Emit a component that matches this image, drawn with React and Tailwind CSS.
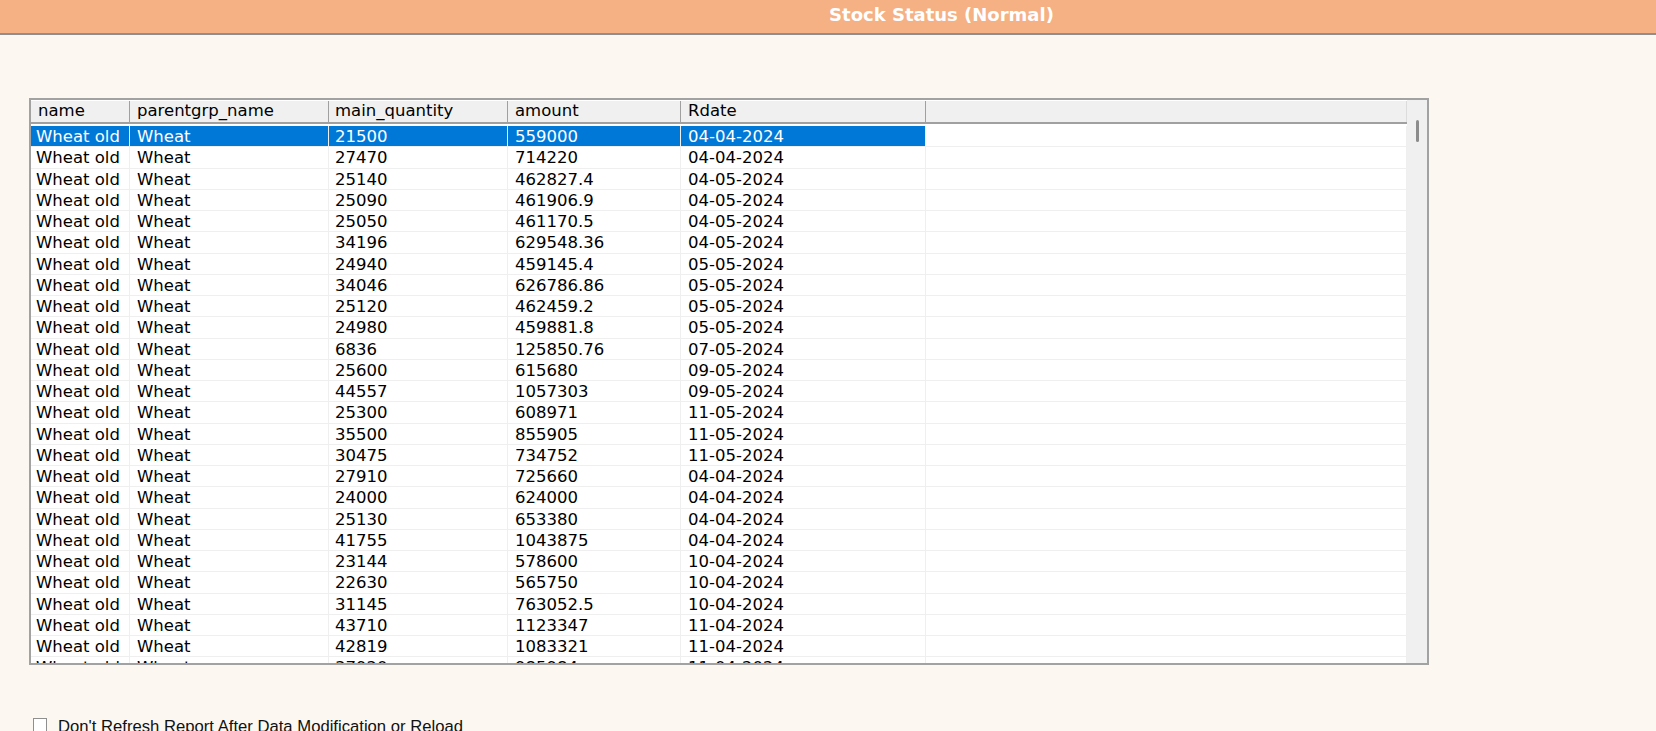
import React from 'react';

const rows = [
  ['Wheat old', 'Wheat', '21500', '559000', '04-04-2024'],
  ['Wheat old', 'Wheat', '27470', '714220', '04-04-2024'],
  ['Wheat old', 'Wheat', '25140', '462827.4', '04-05-2024'],
  ['Wheat old', 'Wheat', '25090', '461906.9', '04-05-2024'],
  ['Wheat old', 'Wheat', '25050', '461170.5', '04-05-2024'],
  ['Wheat old', 'Wheat', '34196', '629548.36', '04-05-2024'],
  ['Wheat old', 'Wheat', '24940', '459145.4', '05-05-2024'],
  ['Wheat old', 'Wheat', '34046', '626786.86', '05-05-2024'],
  ['Wheat old', 'Wheat', '25120', '462459.2', '05-05-2024'],
  ['Wheat old', 'Wheat', '24980', '459881.8', '05-05-2024'],
  ['Wheat old', 'Wheat', '6836', '125850.76', '07-05-2024'],
  ['Wheat old', 'Wheat', '25600', '615680', '09-05-2024'],
  ['Wheat old', 'Wheat', '44557', '1057303', '09-05-2024'],
  ['Wheat old', 'Wheat', '25300', '608971', '11-05-2024'],
  ['Wheat old', 'Wheat', '35500', '855905', '11-05-2024'],
  ['Wheat old', 'Wheat', '30475', '734752', '11-05-2024'],
  ['Wheat old', 'Wheat', '27910', '725660', '04-04-2024'],
  ['Wheat old', 'Wheat', '24000', '624000', '04-04-2024'],
  ['Wheat old', 'Wheat', '25130', '653380', '04-04-2024'],
  ['Wheat old', 'Wheat', '41755', '1043875', '04-04-2024'],
  ['Wheat old', 'Wheat', '23144', '578600', '10-04-2024'],
  ['Wheat old', 'Wheat', '22630', '565750', '10-04-2024'],
  ['Wheat old', 'Wheat', '31145', '763052.5', '10-04-2024'],
  ['Wheat old', 'Wheat', '43710', '1123347', '11-04-2024'],
  ['Wheat old', 'Wheat', '42819', '1083321', '11-04-2024'],
  ['Wheat old', 'Wheat', '37920', '985984', '11-04-2024'],
];

const columns = [
  { label: 'name', w: 'w-[99px]', pad: 'pl-[5px]', hpad: 'pl-[7px]' },
  { label: 'parentgrp_name', w: 'w-[199px]', pad: 'pl-[7px]', hpad: 'pl-[7px]' },
  { label: 'main_quantity', w: 'w-[179px]', pad: 'pl-[6px]', hpad: 'pl-[6px]' },
  { label: 'amount', w: 'w-[173px]', pad: 'pl-[7px]', hpad: 'pl-[7px]' },
  { label: 'Rdate', w: 'w-[245px]', pad: 'pl-[7px]', hpad: 'pl-[7px]' },
];

const StockGrid = () => {
  return (
    <div className="ml-[29px] mt-[63px] w-[1400px] h-[567px] border-2 border-[#a2a2a2] bg-white flex overflow-hidden">
      <div className="flex-1 flex flex-col overflow-hidden">
        {/* Header */}
        <div className="flex h-[24px] shrink-0 bg-[#f0f0f0] border-b-2 border-[#a0a0a0] border-t border-t-white">
          {columns.map((c) => (
            <div
              key={c.label}
              className={`${c.w} ${c.hpad} shrink-0 flex items-start border-r border-[#a0a0a0] leading-[20px]`}
            >
              {c.label}
            </div>
          ))}
          <div className="flex-1 border-r border-[#dcdcdc]"></div>
        </div>

        {/* Rows */}
        <div className="mt-[2px] flex flex-col">
          {rows.map((r, i) => {
            const selected = i === 0;
            return (
              <div key={i} className="flex h-[21.25px] shrink-0 border-b border-[#efefef]">
                {r.map((cell, j) => (
                  <div
                    key={j}
                    className={`${columns[j].w} ${columns[j].pad} shrink-0 flex items-start pt-[1px] leading-[19px] whitespace-nowrap border-r border-[#efefef] ${
                      selected ? 'bg-[#0078d7] text-white' : 'text-black'
                    }`}
                  >
                    {cell}
                  </div>
                ))}
                <div className="flex-1 border-r border-[#efefef]"></div>
              </div>
            );
          })}
        </div>
      </div>

      {/* Scrollbar */}
      <div className="w-[20px] shrink-0 bg-[#f0f0f0] flex justify-center pt-[20px]">
        <div className="w-[3px] h-[22px] bg-[#8c8c8c] rounded-sm"></div>
      </div>
    </div>
  );
};

export default function App() {
  return (
    <div className="w-[1656px] h-[731px] bg-[#fcf8f1] overflow-hidden font-['DejaVu_Sans',sans-serif] text-[16.5px] text-black">
      {/* Title bar */}
      <div className="h-[35px] bg-[#f5b084] border-b-2 border-[#8e8e8e] flex justify-center pl-[227px] pt-[1px]">
        <h1 className="font-bold text-[18px] text-white leading-normal">Stock Status (Normal)</h1>
      </div>

      <StockGrid />

      {/* Options */}
      <div className="mt-[52px] ml-[33px] flex items-start gap-[11px] font-['Liberation_Sans',Arial,sans-serif] text-[16.67px] leading-[19px]">
        <div className="mt-[1px] w-[14px] h-[14px] border border-[#8f8f8f] bg-white shrink-0"></div>
        <span className="text-[#111]">Don't Refresh Report After Data Modification or Reload</span>
      </div>
    </div>
  );
}
